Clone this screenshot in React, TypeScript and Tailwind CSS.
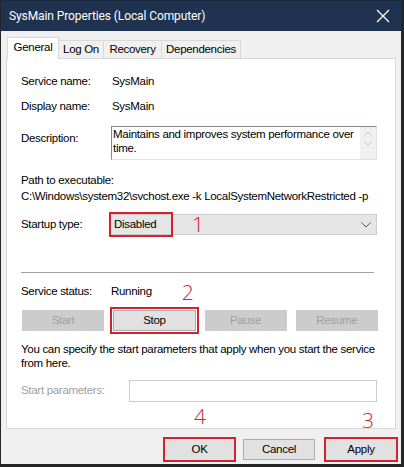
import React from "react";

const red = "outline-2 outline-[#d0222f]";
const numFont = { fontFamily: '"Open Sans", sans-serif' };

function Btn({ label, disabled, className = "" }: { label: string; disabled?: boolean; className?: string }) {
  return (
    <div
      className={`flex items-center justify-center border ${
        disabled ? "bg-[#cccccc] border-[#cccccc] text-[#a0a0a0]" : "bg-[#e1e1e1] border-[#adadad] text-black"
      } ${className}`}
    >
      {label}
    </div>
  );
}

export default function App() {
  return (
    <div
      className="w-[404px] h-[467px] bg-[#f0f0f0] border-l border-r-[3px] border-b-[3px] border-[#262626] flex flex-col overflow-hidden relative text-[11.5px] tracking-[-0.3px]"
      style={{ fontFamily: '"Liberation Sans", Arial, sans-serif' }}
    >
      {/* title bar */}
      <div className="h-[31px] bg-[#1f3350] flex items-center justify-between pl-[8px] pr-[10px] border-t border-[#1a2a42]">
        <span className="text-white text-[12px] tracking-[-0.1px]" style={{ fontFamily: 'Roboto, sans-serif' }}>
          SysMain Properties (Local Computer)
        </span>
        <svg width="14" height="14" viewBox="0 0 14 14" className="mr-[1px]">
          <path d="M1 1 L13 13 M13 1 L1 13" stroke="white" strokeWidth="1.3" />
        </svg>
      </div>

      {/* tabs */}
      <div className="flex items-end pl-[6px] mt-[6px] h-[21px] text-black relative z-10">
        <div className="h-[22px] w-[52px] bg-white border border-b-0 border-[#d9d9d9] flex items-center justify-center mb-[-1px] pb-[2px]">
          General
        </div>
        <div className="h-[18px] w-[45px] border-t border-r border-[#d9d9d9] flex items-center justify-center">Log On</div>
        <div className="h-[18px] w-[58px] border-t border-r border-[#d9d9d9] flex items-center justify-center">Recovery</div>
        <div className="h-[18px] w-[79px] border-t border-r border-[#d9d9d9] flex items-center justify-center">Dependencies</div>
      </div>

      {/* panel */}
      <div className="mx-[5px] w-[390px] h-[371px] bg-white border border-[#d9d9d9] flex flex-col pl-[14px] text-black relative">
        <div className="flex h-[16px] items-center mt-[15px]">
          <span className="w-[91px]">Service name:</span>
          <span>SysMain</span>
        </div>
        <div className="flex h-[16px] items-center mt-[9px]">
          <span className="w-[91px]">Display name:</span>
          <span>SysMain</span>
        </div>
        <div className="flex mt-[11px]">
          <span className="w-[90px] pt-[4px]">Description:</span>
          <div className="w-[266px] h-[34px] border border-[#828790] border-r-[#e3e3e3] border-b-[#e3e3e3] flex">
            <div className="flex-1 leading-[14px] pl-[1px]">
              Maintains and improves system performance over time.
            </div>
            <div className="w-[16px] bg-[#f0f0f0] flex flex-col items-center justify-start pt-[4px] gap-[5px]">
              <svg width="8" height="5" viewBox="0 0 8 5">
                <path d="M0.5 4.5 L4 1 L7.5 4.5" stroke="#c2c2c2" fill="none" strokeWidth="1" />
              </svg>
              <svg width="8" height="5" viewBox="0 0 8 5">
                <path d="M0.5 0.5 L4 4 L7.5 0.5" stroke="#c2c2c2" fill="none" strokeWidth="1" />
              </svg>
            </div>
          </div>
        </div>
        <div className="h-[14px] flex items-center mt-[14px]">Path to executable:</div>
        <div className="h-[14px] flex items-center mt-[2px] whitespace-nowrap">
          C:\Windows\system32\svchost.exe -k LocalSystemNetworkRestricted -p
        </div>
        <div className="flex items-center mt-[10px]">
          <span className="w-[89px]">Startup type:</span>
          <div className="w-[267px] h-[21px] bg-[#e5e5e5] border border-[#cccccc] flex items-center relative">
            <div className={`w-[60px] h-[21px] flex items-center pl-[3px] ${red}`}>Disabled</div>
            <span className="ml-[21px] text-[#d0222f] text-[21px] leading-none font-light tracking-normal" style={numFont}>
              1
            </span>
            <svg width="10" height="6" viewBox="0 0 10 6" className="ml-auto mr-[5px]">
              <path d="M0.5 0.5 L5 5 L9.5 0.5" stroke="#555" fill="none" strokeWidth="1" />
            </svg>
          </div>
        </div>
        <div className="w-[353px] h-px bg-[#a0a0a0] mt-[37px]" />
        <div className="flex h-[14px] items-center mt-[12px]">
          <span className="w-[90px]">Service status:</span>
          <span>Running</span>
          <span className="ml-[30px] text-[#d0222f] text-[21px] leading-none font-light mt-[1px] tracking-normal" style={numFont}>
            2
          </span>
        </div>
        <div className="grid grid-cols-4 gap-x-[9px] w-[356px] h-[21px] mt-[11px] ml-[1px]">
          <Btn label="Start" disabled />
          <Btn label="Stop" className={`outline-offset-[1px] ${red}`} />
          <Btn label="Pause" disabled />
          <Btn label="Resume" disabled />
        </div>
        <div className="leading-[14px] mt-[11px] w-[360px]">
          You can specify the start parameters that apply when you start the service from here.
        </div>
        <div className="flex items-center mt-[10px]">
          <span className="w-[108px] text-[#a0a0a0]">Start parameters:</span>
          <div className="w-[248px] h-[22px] border border-[#cccccc] bg-white" />
        </div>
        <span className="absolute left-[187px] top-[347px] text-[#d0222f] text-[21px] leading-none font-light tracking-normal" style={numFont}>
          4
        </span>
        <span className="absolute left-[355px] top-[351px] text-[#d0222f] text-[21px] leading-none font-light tracking-normal" style={numFont}>
          3
        </span>
      </div>

      {/* bottom buttons */}
      <div className="flex items-center mt-[10px] pl-[164px]">
        <Btn label="OK" className={`w-[69px] h-[21px] border-[#e1e1e1] ${red}`} />
        <Btn label="Cancel" className="w-[72px] h-[21px] ml-[9px]" />
        <Btn label="Apply" className={`w-[70px] h-[21px] ml-[11px] border-[#e1e1e1] ${red}`} />
      </div>
    </div>
  );
}
